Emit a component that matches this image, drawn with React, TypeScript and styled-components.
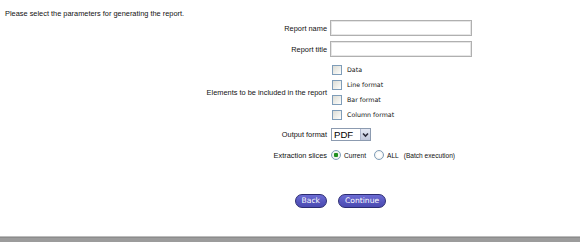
import styled, { createGlobalStyle } from 'styled-components';

const GlobalStyle = createGlobalStyle`
    html, body {
        margin: 0;
        padding: 0;
        background: #ffffff;
    }
    body {
        font-family: "Liberation Sans", Arial, sans-serif;
        color: #111111;
    }
`;

const Page = styled.div`
    display: flex;
    flex-direction: column;
    min-height: 100vh;
`;

const Intro = styled.div`
    padding: 9px 0 0 5px;
    font-size: 7.4px;
    line-height: 9px;
`;

const FormGrid = styled.div`
    display: grid;
    grid-template-columns: 327px 1fr;
    column-gap: 3px;
    margin-top: 2px;
`;

const Label = styled.div<{ $top?: number }>`
    display: flex;
    align-items: center;
    justify-content: flex-end;
    font-size: 7.4px;
    margin-top: ${(p) => p.$top ?? 0}px;
`;

const Cell = styled.div<{ $top?: number; $height?: number }>`
    display: flex;
    align-items: center;
    margin-top: ${(p) => p.$top ?? 0}px;
    min-height: ${(p) => p.$height ?? 0}px;
`;

const TextInput = styled.input`
    box-sizing: border-box;
    width: 142px;
    height: 16px;
    margin: 0;
    border: 1px solid #b0b0b0;
    box-shadow: inset 0 0 0 1px #e6e6e6;
    outline: none;
    padding: 0 3px;
`;

const CheckList = styled.div`
    display: flex;
    flex-direction: column;
    padding-left: 2px;
`;

const CheckRow = styled.label`
    display: flex;
    align-items: center;
    height: 15px;
    gap: 5px;
    font-family: "DejaVu Sans", Verdana, sans-serif;
    font-size: 6.3px;
    color: #111;
`;

const Box = styled.span`
    box-sizing: border-box;
    width: 10px;
    height: 10px;
    border: 1px solid #7f9db9;
    background: linear-gradient(135deg, #dcdcd5 0%, #f4f4f0 70%, #ffffff 100%);
`;

const Select = styled.div`
    box-sizing: border-box;
    display: flex;
    align-items: stretch;
    width: 40px;
    height: 13px;
    margin-left: 1px;
    border: 1px solid #8c9bb0;
    background: #fff;
`;

const SelectValue = styled.span`
    flex: 1;
    font-size: 9.6px;
    line-height: 11px;
    padding-left: 2px;
    color: #000;
`;

const SelectArrow = styled.span`
    width: 9px;
    display: flex;
    align-items: center;
    justify-content: center;
    background: linear-gradient(#e4e8f4, #c2c8dc);
    border-left: 1px solid #aeb6cc;
`;

const RadioGroup = styled.div`
    display: flex;
    align-items: center;
    padding-left: 1px;
    font-size: 6.6px;
`;

const Radio = styled.span<{ $checked?: boolean }>`
    box-sizing: border-box;
    width: 10px;
    height: 10px;
    border-radius: 50%;
    border: 1px solid #7f9db9;
    background: radial-gradient(circle, ${(p) => (p.$checked ? '#1f8f1f 0 2px, #eef2ee 2.5px' : '#ffffff 0 2px, #e6e6e0 100%')});
    margin-right: 3px;
`;

const RadioText = styled.span<{ $gap?: number }>`
    margin-right: ${(p) => p.$gap ?? 0}px;
`;

const ButtonCell = styled.div<{ $align: 'end' | 'start' }>`
    display: flex;
    justify-content: flex-${(p) => p.$align};
    margin-top: 30px;
`;

const PillButton = styled.button<{ $left?: number }>`
    box-sizing: border-box;
    height: 14px;
    margin: 0 0 0 ${(p) => p.$left ?? 0}px;
    padding: 0 6px;
    border: 1px solid #2c2c72;
    border-radius: 7px;
    background: linear-gradient(#6c6cd4, #5555bd 60%, #4b4bb2);
    color: #ffffff;
    font-family: "DejaVu Sans", Verdana, sans-serif;
    font-size: 7.6px;
    line-height: 12px;
    cursor: pointer;
`;

const Footer = styled.div`
    margin-top: auto;
    height: 5px;
    border-top: 1px solid #bdbdbd;
    box-shadow: inset 0 1px 0 #8c8c8c;
    background: #9c9c9c;
`;

const elements = ['Data', 'Line format', 'Bar format', 'Column format'];

const App = () => {
    return (
        <Page>
            <GlobalStyle />
            <Intro>Please select the parameters for generating the report.</Intro>
            <FormGrid>
                <Label>Report name</Label>
                <Cell>
                    <TextInput type="text" />
                </Cell>

                <Label $top={5}>Report title</Label>
                <Cell $top={5}>
                    <TextInput type="text" />
                </Cell>

                <Label $top={5}>Elements to be included in the report</Label>
                <Cell $top={5}>
                    <CheckList>
                        {elements.map((el) => (
                            <CheckRow key={el}>
                                <Box />
                                {el}
                            </CheckRow>
                        ))}
                    </CheckList>
                </Cell>

                <Label $top={6}>Output format</Label>
                <Cell $top={6}>
                    <Select>
                        <SelectValue>PDF</SelectValue>
                        <SelectArrow>
                            <svg width="7" height="6" viewBox="0 0 7 6">
                                <path d="M1 1.5 L3.5 4 L6 1.5" stroke="#2a2a3a" strokeWidth="1.6" fill="none" />
                            </svg>
                        </SelectArrow>
                    </Select>
                </Cell>

                <Label $top={5}>Extraction slices</Label>
                <Cell $top={5} $height={18}>
                    <RadioGroup>
                        <Radio $checked />
                        <RadioText $gap={8}>Current</RadioText>
                        <Radio />
                        <RadioText $gap={5}>ALL</RadioText>
                        <RadioText>(Batch execution)</RadioText>
                    </RadioGroup>
                </Cell>

                <ButtonCell $align="end">
                    <PillButton>Back</PillButton>
                </ButtonCell>
                <ButtonCell $align="start">
                    <PillButton $left={8}>Continue</PillButton>
                </ButtonCell>
            </FormGrid>
            <Footer />
        </Page>
    );
};

export default App;
